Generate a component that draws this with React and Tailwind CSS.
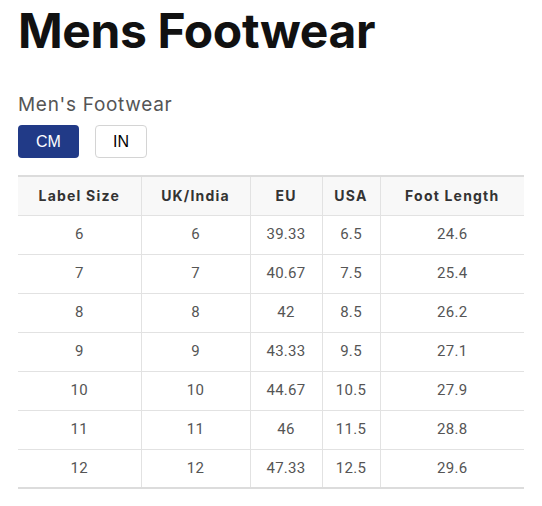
export default function App() {
  const rows = [
    ['6', '6', '39.33', '6.5', '24.6'],
    ['7', '7', '40.67', '7.5', '25.4'],
    ['8', '8', '42', '8.5', '26.2'],
    ['9', '9', '43.33', '9.5', '27.1'],
    ['10', '10', '44.67', '10.5', '27.9'],
    ['11', '11', '46', '11.5', '28.8'],
    ['12', '12', '47.33', '12.5', '29.6'],
  ]
  const headers = ['Label Size', 'UK/India', 'EU', 'USA', 'Foot Length']
  const widths = ['w-[123px]', 'w-[109px]', 'w-[72px]', 'w-[58px]', 'w-[144px]']

  return (
    <div className="min-h-screen bg-white px-[18px] font-['Inter',sans-serif]">
      {/* Title */}
      <h1 className="pt-[1px] text-[48px] leading-[60px] font-bold tracking-[-0.4px] text-[#111]">Mens Footwear</h1>

      {/* Unit toggle */}
      <p className="mt-[32px] text-[19px] leading-[24px] text-[#555] tracking-[0.7px]">Men's Footwear</p>
      <div className="mt-[8px] flex gap-4">
        <button className="w-[61px] h-[33px] rounded bg-[#213a87] text-white text-[16px] font-['Liberation_Sans',sans-serif]">CM</button>
        <button className="w-[52px] h-[33px] rounded border border-[#d4d4d4] bg-white text-black text-[16px] font-['Liberation_Sans',sans-serif]">IN</button>
      </div>

      {/* Size table */}
      <table className="mt-[17px] w-[506px] border-collapse table-fixed border-t-2 border-b-2 border-[#dcdcdc]">
        <thead>
          <tr className="h-[39px] bg-[#f8f8f8]">
            {headers.map((h, i) => (
              <th key={h} className={`${widths[i]} text-[14px] font-bold tracking-[1.2px] text-[#333] border-l border-[#e2e2e2] first:border-l-0`}>{h}</th>
            ))}
          </tr>
        </thead>
        <tbody>
          {rows.map((r) => (
            <tr key={r[0]} className="h-[39px] border-t border-[#e2e2e2]">
              {r.map((c, i) => (
                <td key={i} className="text-center text-[15px] tracking-[0.3px] text-[#555] font-['Roboto',sans-serif] border-l border-[#e2e2e2] first:border-l-0">{c}</td>
              ))}
            </tr>
          ))}
        </tbody>
      </table>
    </div>
  )
}
